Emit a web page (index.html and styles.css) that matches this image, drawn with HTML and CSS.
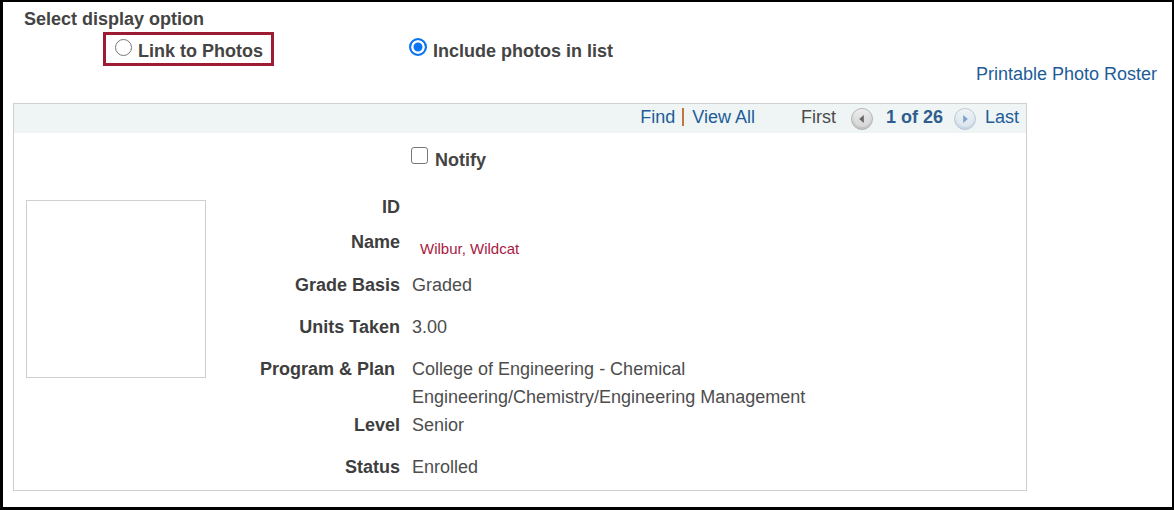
FILE: index.html
```html
<!DOCTYPE html>
<html lang="en">
<head>
<meta charset="utf-8">
<title>Photo Roster</title>
<link rel="stylesheet" href="styles.css">
</head>
<body>
<div class="frame">
  <div class="title">Select display option</div>
  <div class="options">
    <label class="opt opt-boxed">
      <input type="radio" name="disp" class="radio">
      <span class="opt-text">Link to Photos</span>
    </label>
    <label class="opt opt-plain">
      <input type="radio" name="disp" class="radio" checked>
      <span class="opt-text">Include photos in list</span>
    </label>
  </div>
  <div class="printable"><a href="#" class="link">Printable Photo Roster</a></div>

  <div class="grid">
    <div class="grid-head">
      <a href="#" class="link">Find</a>
      <span class="sep"></span>
      <a href="#" class="link view-all">View All</a>
      <span class="nav-first">First</span>
      <svg class="nav-btn nav-prev" width="22" height="22" viewBox="0 0 22 22">
        <defs>
          <linearGradient id="gp" x1="0" y1="0" x2="0" y2="1">
            <stop offset="0" stop-color="#f2f2f2"/>
            <stop offset="1" stop-color="#bfbfbf"/>
          </linearGradient>
        </defs>
        <circle cx="11" cy="11" r="10.5" fill="url(#gp)" stroke="#b4b4b4" stroke-width="1"/>
        <circle cx="11" cy="11" r="8" fill="#e6e6e6" opacity="0.55"/>
        <path d="M12.8 7 L8.2 11 L12.8 15 Z" fill="#666"/>
      </svg>
      <span class="count">1 of 26</span>
      <svg class="nav-btn nav-next" width="22" height="22" viewBox="0 0 22 22">
        <defs>
          <linearGradient id="gn" x1="0" y1="0" x2="0" y2="1">
            <stop offset="0" stop-color="#f4f7fa"/>
            <stop offset="1" stop-color="#c6d4e2"/>
          </linearGradient>
        </defs>
        <circle cx="11" cy="11" r="10.5" fill="url(#gn)" stroke="#bccad6" stroke-width="1"/>
        <circle cx="11" cy="11" r="8" fill="#eaf0f5" opacity="0.55"/>
        <path d="M9.2 7 L13.8 11 L9.2 15 Z" fill="#7fa2c8"/>
      </svg>
      <a href="#" class="link nav-last">Last</a>
    </div>

    <div class="grid-body">
      <div class="photo-col">
        <div class="photo"></div>
      </div>
      <div class="fields">
        <div class="row row-notify">
          <div class="label"></div>
          <label class="value notify">
            <input type="checkbox" class="check">
            <span class="notify-text">Notify</span>
          </label>
        </div>
        <div class="row row-id">
          <div class="label">ID</div>
          <div class="value"></div>
        </div>
        <div class="row row-name">
          <div class="label">Name</div>
          <div class="value"><a href="#" class="name-link">Wilbur, Wildcat</a></div>
        </div>
        <div class="row">
          <div class="label">Grade Basis</div>
          <div class="value">Graded</div>
        </div>
        <div class="row">
          <div class="label">Units Taken</div>
          <div class="value">3.00</div>
        </div>
        <div class="row">
          <div class="label label-prog">Program &amp; Plan</div>
          <div class="value">College of Engineering - Chemical<br>Engineering/Chemistry/Engineering Management</div>
        </div>
        <div class="row">
          <div class="label">Level</div>
          <div class="value">Senior</div>
        </div>
        <div class="row row-last">
          <div class="label">Status</div>
          <div class="value">Enrolled</div>
        </div>
      </div>
    </div>
  </div>
</div>
</body>
</html>
```

FILE: styles.css
```css
html, body {
  margin: 0;
  padding: 0;
  background: #fff;
}

body {
  font-family: "Liberation Sans", Arial, sans-serif;
  font-size: 18px;
  color: #444;
}

.frame {
  width: 1174px;
  height: 510px;
  box-sizing: border-box;
  border-style: solid;
  border-color: #000;
  border-width: 2px 2px 3px 3px;
  overflow: hidden;
}

.title {
  margin-top: 7px;
  padding-left: 21px;
  line-height: 20px;
  font-weight: bold;
  color: #444;
}

.options {
  display: flex;
  margin-top: 3px;
  height: 34px;
}

.opt {
  display: flex;
  align-items: flex-start;
  box-sizing: border-box;
  height: 34px;
  font-weight: bold;
  color: #444;
  line-height: 20px;
}

.opt-boxed {
  margin-left: 100px;
  width: 171px;
  border: 3px solid #9d1c33;
  padding: 4px 0 0 9px;
}

.opt-plain {
  margin-left: 135px;
  padding-top: 6px;
}

.opt-text {
  margin-top: 2px;
  margin-left: 6px;
}

.opt-plain .opt-text {
  margin-top: 3px;
}

.radio {
  appearance: none;
  -webkit-appearance: none;
  margin: 0;
  width: 17px;
  height: 17px;
  border-radius: 50%;
  border: 1.5px solid #777;
  background: #fff;
  box-sizing: border-box;
  flex: none;
}

.opt-plain .radio {
  width: 18px;
  height: 18px;
}

.radio:checked {
  border: 2px solid #0b74f0;
  background: #0b74f0;
  box-shadow: inset 0 0 0 2.5px #fff;
}

.printable {
  text-align: right;
  padding-right: 15px;
  line-height: 16px;
}

.link {
  color: #215c99;
  text-decoration: none;
}

.grid {
  margin: 21px 0 0 10px;
  width: 1014px;
  box-sizing: border-box;
  border: 1px solid #cdcfd0;
}

.grid-head {
  display: flex;
  align-items: center;
  justify-content: flex-end;
  height: 29px;
  box-sizing: border-box;
  padding: 0 7px 4px 0;
  background: #eff5f5;
  line-height: 20px;
}

.sep {
  width: 2px;
  height: 18px;
  margin-left: 7px;
  background: #c1753f;
}

.view-all {
  margin-left: 8px;
}

.nav-first {
  margin-left: 46px;
  color: #4a4a4a;
}

.nav-btn {
  display: block;
  flex: none;
  width: 22px;
  height: 22px;
  margin-top: 4px;
}

.nav-prev {
  margin-left: 15px;
}

.count {
  margin-left: 13px;
  font-weight: bold;
  color: #2f5e8e;
}

.nav-next {
  margin-left: 11px;
}

.nav-last {
  margin-left: 9px;
}

.grid-body {
  display: flex;
  align-items: flex-start;
  padding-top: 13px;
}

.photo-col {
  padding-left: 12px;
  padding-top: 54px;
}

.photo {
  width: 180px;
  height: 178px;
  box-sizing: border-box;
  border: 1px solid #cdcfd0;
}

.fields {
  flex: 1;
}

.row {
  display: grid;
  grid-template-columns: 194px 1fr;
  column-gap: 12px;
  min-height: 42px;
  line-height: 28px;
}

.row-notify {
  min-height: 47px;
}

.row-id {
  min-height: 34.5px;
}

.row-name {
  min-height: 43.5px;
}

.row-last {
  min-height: 0;
  padding-bottom: 9px;
}

.label {
  text-align: right;
  font-weight: bold;
  color: #3e3e3e;
}

.label-prog {
  padding-right: 5px;
}

.value {
  color: #4d4d4d;
}

.notify {
  display: flex;
  align-items: flex-start;
  margin-left: -1px;
  font-weight: bold;
  color: #444;
}

.check {
  appearance: none;
  -webkit-appearance: none;
  margin: 1px 0 0 0;
  width: 17px;
  height: 17px;
  box-sizing: border-box;
  border: 1.5px solid #777;
  border-radius: 3px;
  background: #fff;
  flex: none;
}

.notify-text {
  margin-left: 7px;
}

.name-link {
  display: inline-block;
  padding: 7px 0 0 8px;
  font-size: 15px;
  color: #a8193f;
  text-decoration: none;
}
```
